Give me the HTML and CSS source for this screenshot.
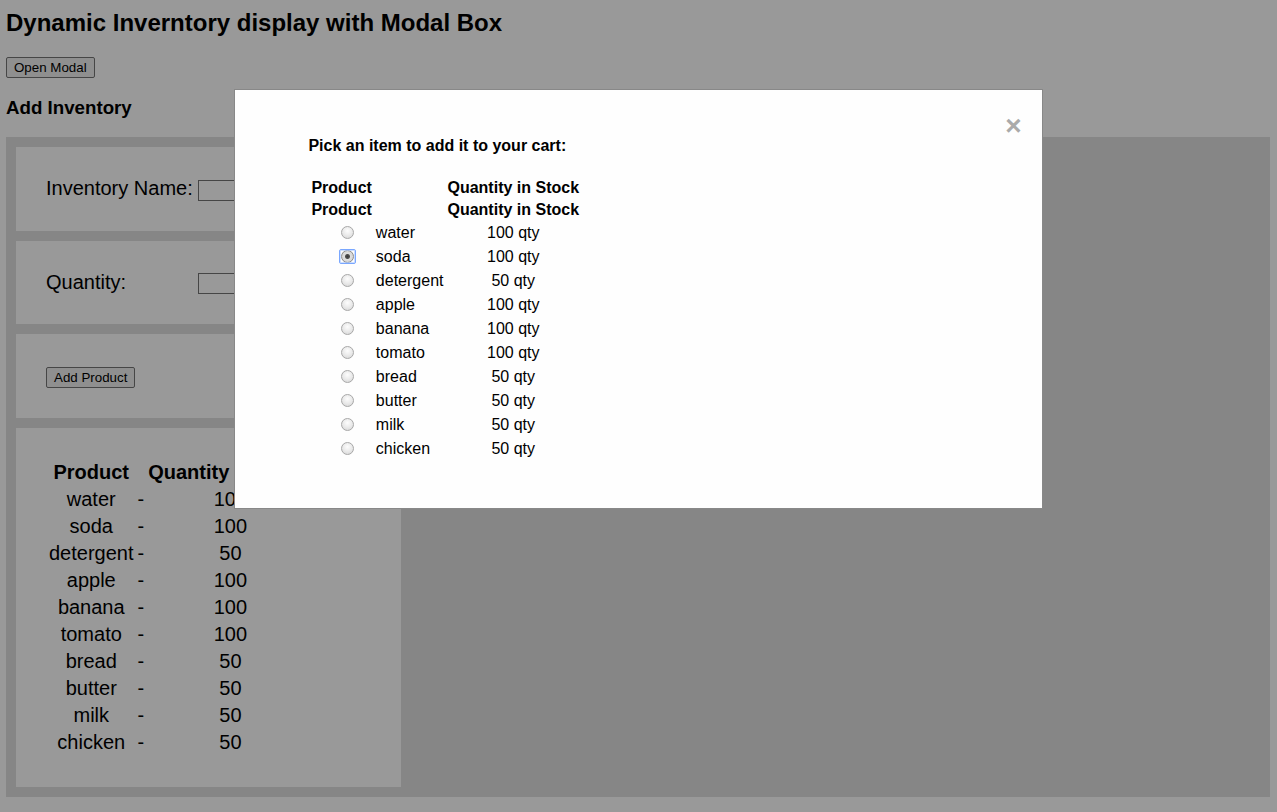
FILE: index.html
```html
<!DOCTYPE html>
<html lang="en">
<head>
<meta charset="utf-8">
<title>Dynamic Inventory</title>
<link rel="stylesheet" href="styles.css">
</head>
<body>
  <h2 class="title">Dynamic Inverntory display with Modal Box</h2>
  <div class="actions"><button class="btn" type="button">Open Modal</button></div>
  <h3 class="subtitle">Add Inventory</h3>

  <div class="grid">
    <div class="box">
      <label class="field-label" for="inv-name">Inventory Name:</label><input class="text-input" id="inv-name" type="text">
    </div>
    <div class="box">
      <label class="field-label" for="inv-qty">Quantity:</label><input class="text-input" id="inv-qty" type="text">
    </div>
    <div class="box">
      <button class="btn" type="button">Add Product</button>
    </div>
    <div class="box">
      <table class="stock">
        <tr><th>Product</th><th></th><th>Quantity in Stock</th></tr>
        <tr><td>water</td><td>-</td><td>100</td></tr>
        <tr><td>soda</td><td>-</td><td>100</td></tr>
        <tr><td>detergent</td><td>-</td><td>50</td></tr>
        <tr><td>apple</td><td>-</td><td>100</td></tr>
        <tr><td>banana</td><td>-</td><td>100</td></tr>
        <tr><td>tomato</td><td>-</td><td>100</td></tr>
        <tr><td>bread</td><td>-</td><td>50</td></tr>
        <tr><td>butter</td><td>-</td><td>50</td></tr>
        <tr><td>milk</td><td>-</td><td>50</td></tr>
        <tr><td>chicken</td><td>-</td><td>50</td></tr>
      </table>
    </div>
  </div>

  <div class="overlay">
    <div class="modal">
      <span class="close">&times;</span>
      <div class="picker">
        <h4 class="picker-title">Pick an item to add it to your cart:</h4>
        <table class="cart">
          <tr><th>Product</th><th></th><th>Quantity in Stock</th></tr>
          <tr><th>Product</th><th></th><th>Quantity in Stock</th></tr>
          <tr class="item"><td><span class="radio-wrap"><input class="radio" type="radio" name="item"></span></td><td>water</td><td class="qty">100 qty</td></tr>
          <tr class="item"><td><span class="radio-wrap focused"><input class="radio" type="radio" name="item" checked></span></td><td>soda</td><td class="qty">100 qty</td></tr>
          <tr class="item"><td><span class="radio-wrap"><input class="radio" type="radio" name="item"></span></td><td>detergent</td><td class="qty">50 qty</td></tr>
          <tr class="item"><td><span class="radio-wrap"><input class="radio" type="radio" name="item"></span></td><td>apple</td><td class="qty">100 qty</td></tr>
          <tr class="item"><td><span class="radio-wrap"><input class="radio" type="radio" name="item"></span></td><td>banana</td><td class="qty">100 qty</td></tr>
          <tr class="item"><td><span class="radio-wrap"><input class="radio" type="radio" name="item"></span></td><td>tomato</td><td class="qty">100 qty</td></tr>
          <tr class="item"><td><span class="radio-wrap"><input class="radio" type="radio" name="item"></span></td><td>bread</td><td class="qty">50 qty</td></tr>
          <tr class="item"><td><span class="radio-wrap"><input class="radio" type="radio" name="item"></span></td><td>butter</td><td class="qty">50 qty</td></tr>
          <tr class="item"><td><span class="radio-wrap"><input class="radio" type="radio" name="item"></span></td><td>milk</td><td class="qty">50 qty</td></tr>
          <tr class="item"><td><span class="radio-wrap"><input class="radio" type="radio" name="item"></span></td><td>chicken</td><td class="qty">50 qty</td></tr>
        </table>
      </div>
    </div>
  </div>
</body>
</html>
```

FILE: styles.css
```css
html, body {
  background: #ffffff;
}

body {
  margin: 0 7px 0 6px;
  font-family: "Liberation Sans", Arial, sans-serif;
  color: #000;
}

.title {
  font-size: 24px;
  font-weight: bold;
  margin: 9px 0 20px;
}

.actions {
  display: flex;
}

.btn {
  font-family: "Liberation Sans", Arial, sans-serif;
  font-size: 13.333px;
  line-height: 15px;
  padding: 2px 7px;
  border: 1px solid #767676;
  border-radius: 2px;
  background: #efefef;
  color: #000;
}

.subtitle {
  font-size: 18.72px;
  font-weight: bold;
  margin: 18.72px 0;
}

.grid {
  display: grid;
  grid-template-columns: 385px;
  gap: 10px;
  padding: 10px;
  background: #dfdfdf;
}

.box {
  background: #ffffff;
  padding: 30px;
  font-size: 20px;
}

.field-label {
  display: inline-block;
  width: 152px;
}

.text-input {
  font-family: "Liberation Sans", Arial, sans-serif;
  font-size: 13.333px;
  line-height: 15px;
  padding: 2px 3px;
  border: 1px solid #767676;
  background: #fff;
  width: 146px;
  vertical-align: 0.5px;
}

.stock {
  font-size: 20px;
}

.stock th {
  font-weight: bold;
}

.stock td {
  text-align: center;
}

/* Modal */
.overlay {
  position: fixed;
  inset: 0;
  background: rgba(0, 0, 0, 0.4);
  z-index: 10;
}

.modal {
  width: 60%;
  margin: 89px auto 0;
  padding: 20px;
  border: 1px solid #888;
  background: #fefefe;
}

.close {
  float: right;
  color: #aaaaaa;
  font-size: 28px;
  font-weight: bold;
  line-height: 28px;
  margin-top: 2px;
}

.picker {
  padding: 27px 0 26px 53px;
}

.picker-title {
  font-size: 16px;
  font-weight: bold;
  margin: 0 0 21px;
}

.cart {
  font-size: 16px;
}

.cart th {
  font-weight: bold;
}

.cart .item td {
  line-height: 20px;
  text-align: left;
}

.cart .item td.qty {
  text-align: center;
}

.radio-wrap {
  display: inline-block;
  position: relative;
  margin-left: 30px;
  width: 13px;
  height: 13px;
  vertical-align: -1px;
}

.radio {
  appearance: none;
  -webkit-appearance: none;
  display: block;
  width: 13px;
  height: 13px;
  margin: 0;
  border: 1px solid #a8a8a8;
  border-radius: 50%;
  background: radial-gradient(circle at 50% 35%, #fdfdfd 0, #e8e8e8 55%, #d2d2d2 100%);
  box-sizing: border-box;
}

.radio:checked {
  background: radial-gradient(circle, #3a3a3a 0, #4f4f4f 2px, #dedede 3px, #d0d0d0 100%);
  border-color: #8a8a8a;
}

.focused::after {
  content: "";
  position: absolute;
  left: -2px;
  top: -1px;
  width: 17px;
  height: 15px;
  border: 1px solid #7aa7ff;
  border-radius: 2px;
  box-sizing: border-box;
  box-shadow: inset 0 0 0 1px rgba(170, 200, 255, 0.6);
}
```
